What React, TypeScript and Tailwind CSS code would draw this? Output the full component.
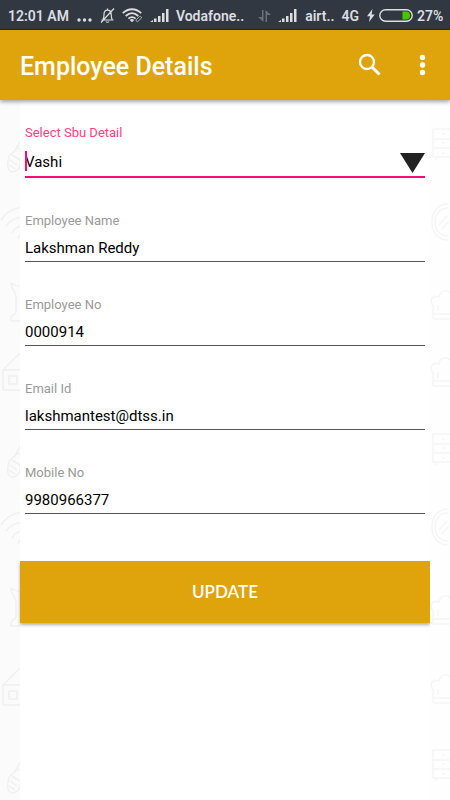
import React, { useState } from "react";

interface Field {
  id: string;
  label: string;
  value: string;
  type: "text" | "email" | "tel";
}

const FIELDS: Field[] = [
  { id: "employee-name", label: "Employee Name", value: "Lakshman Reddy", type: "text" },
  { id: "employee-no", label: "Employee No", value: "0000914", type: "text" },
  { id: "email-id", label: "Email Id", value: "lakshmantest@dtss.in", type: "email" },
  { id: "mobile-no", label: "Mobile No", value: "9980966377", type: "tel" },
];

const BRANCHES = ["Vashi", "Thane", "Pune"];

// ─── Status bar ───────────────────────────────────────────────────────────

function BellOff() {
  return (
    <svg width="15" height="17" viewBox="0 0 15 17" fill="none" stroke="currentColor" strokeWidth="1.2" className="shrink-0">
      <path d="M1.500 13h12M3 12.500c1-1.200 1-2.600 1-5C4 5 5.200 3.200 7.500 3.200S11.200 5 11.200 7.500c0 2.400.1 3.800 1 5M7.500 1.500v1.500M6 14.500c.8 1 2.200 1 3 0M1 15.500 14 1.500" />
    </svg>
  );
}

function Wifi() {
  return (
    <svg width="21" height="15" viewBox="0 0 21 15" fill="none" stroke="currentColor" className="shrink-0">
      <path d="M.8 5.200c5.400-5.300 13-5.300 18.400 0M3.700 8c4-3.700 8.600-3.700 12.600 0M6.400 10.600c2.400-2 4.800-2 7.200 0" strokeWidth="1.800" />
      <path d="M10 14.200 7.800 12c1.400-1.200 3-1.200 4.400 0z" fill="currentColor" stroke="none" />
      <path d="m14.300 11.600 3.300-3.100M15.700 13.600l3.700-3.500M14.300 11.600c-.7 1.200.4 2.300 1.400 2M17.600 8.500c1.200-.5 2.300.6 1.800 1.600" strokeWidth="1" opacity=".7" />
    </svg>
  );
}

function Signal() {
  return (
    <svg width="19" height="14" viewBox="0 0 19 14" fill="currentColor" className="shrink-0">
      <path d="M0 13l3-2v2zM4 9.500h2.500V13H4zM8 7h2.500v6H8zM12 4h2.500v9H12zM16 0h2.500v13H16z" />
    </svg>
  );
}

function StatusBar() {
  return (
    <div className="flex h-[30px] items-center overflow-hidden whitespace-nowrap border-b border-[#1f2937] bg-[#313842] px-2 pt-0.5 text-sm font-semibold text-[#dcdee0]">
      <span>12:01 AM</span>
      <svg width="15" height="14" viewBox="0 0 15 14" fill="currentColor" className="mx-2 shrink-0">
        <circle cx="2" cy="11" r="1.700" />
        <circle cx="7.500" cy="11" r="1.700" />
        <circle cx="13" cy="11" r="1.700" />
      </svg>
      <BellOff />
      <span className="mx-[7px]"><Wifi /></span>
      <Signal />
      <span className="ml-[7px]">Vodafone..</span>
      <svg width="13" height="14" viewBox="0 0 13 14" fill="#6a7079" className="ml-[14px] mr-[7px] shrink-0">
        <path d="M4 1h1.500v12L0 8h4zM7.500 13H9V6h4L7.500 1z" />
      </svg>
      <Signal />
      <span className="ml-2">airt..</span>
      <span className="ml-[7px]">4G</span>
      <svg width="8" height="13" viewBox="0 0 8 13" fill="currentColor" className="ml-2 shrink-0">
        <path d="M5.500 0 0 7.300h3L2 13l5.700-7.600H4.600z" />
      </svg>
      <svg width="34" height="13" viewBox="0 0 34 13" className="mx-1 shrink-0">
        <rect x=".8" y=".8" width="32.400" height="11.400" rx="5.700" fill="none" stroke="currentColor" strokeWidth="1.400" />
        <path d="M23.500 2.500H27a4 4 0 0 1 0 8h-3.500z" fill="#46c800" />
      </svg>
      <span>27%</span>
    </div>
  );
}

// ─── Background motifs ────────────────────────────────────────────────────

const MOTIFS = {
  brush: "M26 -6 14 14M9 18l9-8 6 4-4 13c-1 6-8 9-11 5-3-3-1-8 0-14zM10 22l7 5M12 17l8 5M9 27l6 4",
  wifi: "M1 12C8 1 18-1 26-1M6 18c5-7 11-9 20-9M12 25c3-6 7-7 14-7M18 31c1-5 3-5 8-5",
  vase: "M26 1c-6 3-10 3-15-1-1 5 5 8 5 14v15c0 3-5 2-5 6v3h15",
  house: "M26 0h-7L3 16v20h23M3 16h18l5-6M21 16v20M9 22h8v8H9z",
  drawers: "M3 0h26v28H3zM3 10h26M3 19h26M12 5h3M12 14h3M12 24h3M6 28v3",
  mirror: "M18 0C8 0 2 8 2 18s6 18 16 18M18 4C10 4 5 10 5 18s5 14 13 14M9 21l8-9M12 25l7-8",
  hat: "M3 28V15C-2 8 4 4 9 6 10-2 20-2 22 5M3 23h20M3 28h20M8 20v-6",
};

type Motif = keyof typeof MOTIFS;

const LEFT: [Motif, number][] = [
  ["brush", 38], ["wifi", 108], ["vase", 183], ["house", 254],
  ["brush", 343], ["wifi", 413], ["vase", 488], ["house", 569], ["brush", 659],
];

const RIGHT: [Motif, number][] = [
  ["drawers", 29], ["mirror", 104], ["hat", 191], ["hat", 258],
  ["drawers", 334], ["mirror", 409], ["hat", 496], ["hat", 575], ["drawers", 650],
];

function Backdrop({ items, className }: { items: [Motif, number][]; className: string }) {
  return (
    <svg aria-hidden="true" width="20" height="100%" fill="none" strokeWidth="1.500" strokeLinejoin="round" className={className}>
      {items.map(([name, y]) => (
        <path key={y} d={MOTIFS[name]} transform={`translate(0 ${y})`} />
      ))}
    </svg>
  );
}

export default function App() {
  const [branch, setBranch] = useState(BRANCHES[0]);
  const [values, setValues] = useState<Record<string, string>>(
    Object.fromEntries(FIELDS.map(f => [f.id, f.value]))
  );

  return (
    <div className="flex min-h-screen flex-col bg-white font-['Roboto',sans-serif]">
      <StatusBar />

      <header className="z-10 flex h-[70px] items-center bg-[#dfa40b] pl-5 pr-4 text-white shadow-[0_2px_4px_rgba(0,0,0,0.35)]">
        <h1 className="flex-1 pt-1 text-[25px] font-medium leading-8">Employee Details</h1>
        <button type="button" aria-label="Search" className="mr-7">
          <svg width="24" height="24" viewBox="0 0 24 24" fill="none" stroke="currentColor" strokeWidth="2.300">
            <circle cx="9" cy="9" r="7" />
            <path d="m14 14 7.500 7.500" strokeWidth="3" />
          </svg>
        </button>
        <button type="button" aria-label="More options">
          <svg width="24" height="24" viewBox="0 0 24 24" fill="currentColor">
            <circle cx="12.500" cy="4.500" r="2.700" />
            <circle cx="12.500" cy="12" r="2.700" />
            <circle cx="12.500" cy="19.500" r="2.700" />
          </svg>
        </button>
      </header>

      <main className="grid flex-1 grid-cols-[20px_1fr_20px]">
        <Backdrop items={LEFT} className="bg-[#fbfbfb] stroke-[#f0f0f0]" />

        <form className="pt-[23px]" onSubmit={e => e.preventDefault()}>
          <div className="flex flex-col gap-[33px] px-[5px]">
            <div>
              <label htmlFor="sbu" className="block text-[13px] leading-5 text-[#ff4081]">Select Sbu Detail</label>
              <div className="relative mt-1 border-b-2 border-[#ff0a72]">
                <select id="sbu" value={branch} onChange={e => setBranch(e.target.value)}
                  className="block h-[29px] w-full appearance-none bg-transparent pt-px text-[15px] text-black outline-none">
                  {BRANCHES.map(b => <option key={b}>{b}</option>)}
                </select>
                {/* Text cursor */}
                <span className="pointer-events-none absolute left-0 top-1 h-5 w-0.5 bg-[#ff0a72]" />
                <svg width="25" height="20" viewBox="0 0 25 20" className="pointer-events-none absolute right-0 top-1.5">
                  <path d="M0 0h25L12.500 20z" fill="#222" />
                </svg>
              </div>
            </div>

            {FIELDS.map(f => (
              <div key={f.id}>
                <label htmlFor={f.id} className="block text-[13px] leading-5 text-[#999]">{f.label}</label>
                <input id={f.id} type={f.type} value={values[f.id]}
                  onChange={e => setValues({ ...values, [f.id]: e.target.value })}
                  className="mt-1 block h-[27px] w-full border-b border-[#555] bg-transparent text-[15px] text-black outline-none" />
              </div>
            ))}
          </div>

          <button type="submit"
            className="mt-[47px] h-[62px] w-full bg-[#dfa40b] font-['Lato',sans-serif] text-[17px] font-semibold text-white shadow-[0_2px_3px_rgba(0,0,0,0.3)]">
            UPDATE
          </button>
        </form>

        <Backdrop items={RIGHT} className="bg-[#fefefe] stroke-[#f5f5f5]" />
      </main>
    </div>
  );
}
